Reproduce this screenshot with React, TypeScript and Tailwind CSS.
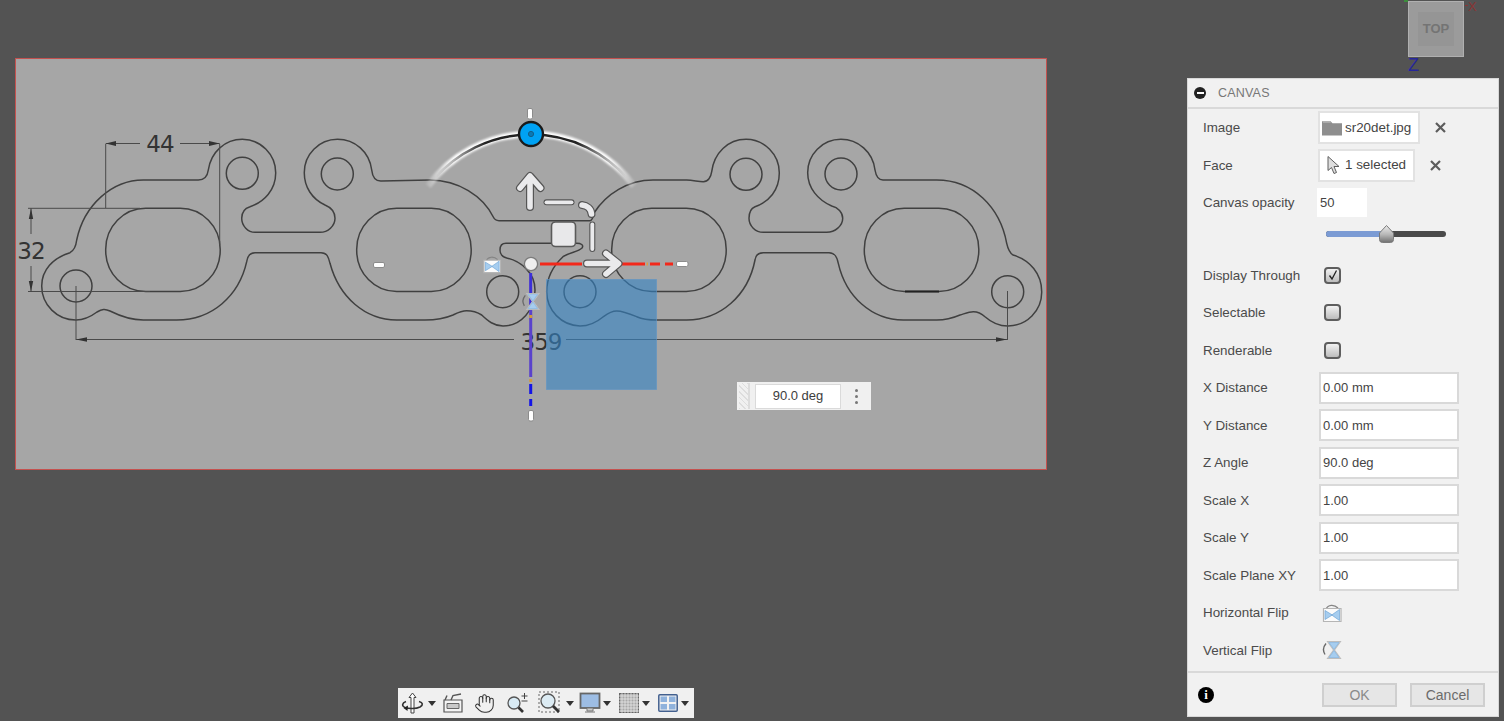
import { Hand } from "lucide-react";

const font = "font-['Liberation_Sans',Arial,sans-serif]";

const gasket =
  "M70 252.7 C73 251 76 246 76.7 240 C84 205 112 180 143.3 180 L198.3 180 C204 180 207.5 176 208.3 170 C211 152 225 139.3 242.3 139.3 A33.5 33.5 0 0 1 275.7 173 C275.7 190 264 202 250 206.7 C244 208.5 241.7 213 241.7 218.3 C241.7 226 248 232.3 255 232.3 L320 232.3 C328 232.3 335 226 335 218.3 C335 212 331 207.5 325 205 C312 199 304.3 187 304.3 173 A33.2 33.2 0 0 1 337.5 139.3 C355 139.3 369.5 152 371.7 170 C372.5 177 376 181.5 381.7 181 L430 180 C458 180 483 196 493.3 217 C494.5 219.5 496 220.7 499 220.7 L590 220.7 C592 220.7 593 218 594 213 C606 194 628 180 653 180 L686.7 180 C693 180 698 181.7 703.3 181.7 C708 181.7 711 177 711.7 171.7 C714 153 728 139.3 746 139.3 A33.5 33.5 0 0 1 779.3 173 C779.3 190 769 202 755 206.7 C750.5 208.5 749 213 749 218.3 C749 226 755.5 232.3 763.3 232.3 L826.7 232.3 C835 232.3 842.7 226 842.7 218.3 C842.7 212.5 838 207.5 831.7 206 C818 200 807.7 188 807.7 173 A33.2 33.2 0 0 1 841 139.3 C858 139.3 873 152 875 170 C876 176 879 180 883 180 L936.7 180 C973 180 1000 207 1006.7 243.3 C1008 249 1010 253 1013 255 C1030 260 1041.7 274 1041.7 291.7 A33.8 33.8 0 0 1 1007.7 326 C998 326 991 322 985 316.7 C981 313 977 311.7 973.3 311.7 C969 311.7 965 313.5 960 315 C953 318 945 320 936.7 320 L903.3 320 C872 320 846 297 838.3 263.3 C837 257 835 252.7 829 252.7 L763.3 252.7 C758 252.7 755.5 256 755 260 C748 296 720 320 686.7 320 L656.7 320 C648 320 642 319 636.7 316.7 C629 313.5 623 311 616.7 311 C611 311 607 314 603.3 316.7 C597 322 589 326 580 326 A34.2 34.2 0 0 1 546.7 291.7 C546.7 278 553 266 563 256.7 C570 252 578 252 582 248 C584 245 581 243.3 576.7 243.3 L506 243.3 C502 243.3 500 246 500 250 C500 254 503 257 506.7 258 C520 261 535 272 535 290 C535 310 521 326 503 326 C494 326 488 321 481.7 315 C477 312 472 310.7 466.7 310.7 C461 310.7 457 313 453 315 C446 318 436 320 425 320 L396.7 320 C365 320 339 297 330 263.3 C328.5 257 327 252.7 321 252.7 L255 252.7 C250 252.7 247.5 256 246.7 261.7 C239 296 212 320 176.7 320 L143.3 320 C130 320 120 316 110 311 C105 308.5 102 309 97 312 C91 316.5 84 320 76 320 A34 34 0 0 1 41.7 286 C41.7 270 53 258 70 252.7 Z";

const ports = [105.7, 356.7, 611.7, 864.3];
const holes = [
  [242.3, 173.3],
  [337.3, 174],
  [746, 174.3],
  [841, 174],
  [76, 286],
  [1007.7, 291.7],
  [502.7, 291.7],
  [580, 291.7],
];

function FlipH({ x = 0, y = 0, size = 20 }: { x?: number; y?: number; size?: number }) {
  return (
    <svg x={x} y={y} width={size} height={size} viewBox="0 0 20 20">
      <path d="M4 6C6 1.5 12 1 16 5" fill="none" stroke="#858585" strokeWidth="1.2" />
      <path d="M1.5 5.5V18.5H19V5.5Z" fill="#fbfbfb" stroke="#b5b5b5" strokeWidth="1.2" />
      <path d="M3 7.5L10 11.8V12.2L3 16.5ZM17.5 6.5L10 11.8V12.2L17.5 17.5Z" fill="#a6cdef" stroke="#6ea5d6" strokeWidth=".7" />
    </svg>
  );
}

function FlipV({ x = 0, y = 0, size = 20 }: { x?: number; y?: number; size?: number }) {
  return (
    <svg x={x} y={y} width={size} height={size} viewBox="0 0 20 20">
      <path d="M4 3.5C1 7 .8 11 3 14.5" fill="none" stroke="#6a6a6a" strokeWidth="1.4" />
      <path d="M5.5 1.5H18.5L12.5 10L18.5 18.5H5.5L11.5 10Z" fill="#fbfbfb" stroke="#bdbdbd" strokeWidth="1.1" />
      <path d="M7 2.5H17L12 9.5ZM7 17.5H17L12 10.5Z" fill="#a6cdef" stroke="#6ea5d6" strokeWidth=".6" />
    </svg>
  );
}

function ThickLine({ d, wide = false }: { d: string; wide?: boolean }) {
  return (
    <>
      <path d={d} fill="none" stroke="#555" strokeWidth={wide ? 8 : 6} strokeLinecap="round" strokeLinejoin="round" />
      <path d={d} fill="none" stroke="#eaeaec" strokeWidth={wide ? 5.6 : 3.8} strokeLinecap="round" strokeLinejoin="round" />
    </>
  );
}

function Sketch() {
  return (
    <svg viewBox="15 58 1032 412" className="block h-full w-full">
      <defs>
        <linearGradient id="arcGlow" gradientUnits="userSpaceOnUse" x1="422" y1="0" x2="640" y2="0">
          <stop offset="0" stopColor="#fff" stopOpacity="0" />
          <stop offset=".14" stopColor="#fff" />
          <stop offset=".86" stopColor="#fff" />
          <stop offset="1" stopColor="#fff" stopOpacity="0" />
        </linearGradient>
        <linearGradient id="arcDark" gradientUnits="userSpaceOnUse" x1="436" y1="0" x2="626" y2="0">
          <stop offset="0" stopColor="#222" stopOpacity="0" />
          <stop offset=".26" stopColor="#222" />
          <stop offset=".74" stopColor="#222" />
          <stop offset="1" stopColor="#222" stopOpacity="0" />
        </linearGradient>
      </defs>

      {/* part outline */}
      <g fill="none" stroke="#404040" strokeWidth="1.5">
        <path d={gasket} />
        {ports.map((x) => (
          <rect key={x} x={x} y="208.3" width="114.5" height="83.3" rx="40" ry="41" />
        ))}
        {holes.map(([cx, cy]) => (
          <circle key={cx} cx={cx} cy={cy} r="16" />
        ))}
      </g>
      <path d="M905 291.6H939" stroke="#222" strokeWidth="2" />

      {/* dimensions */}
      <g fill="none" stroke="#4a4a4a" strokeWidth="1">
        <path d="M105.7 144V208M219.7 144V245M105.7 143.5H140M180 143.5H219.7" />
        <path d="M28 208.3H140M28 291.5H150M31 208.3V234M31 266V291.5" />
        <path d="M76 286V340M1007.5 291V340M76 339.5H514M566 339.5H1007" />
      </g>
      <g fill="#333">
        <path d="M105.7 143.5L116 141V146ZM219.7 143.5L209 141V146Z" />
        <path d="M31 208.3L28.8 219H33.2ZM31 291.5L28.8 281H33.2Z" />
        <path d="M76 339.5L87 337.3V341.7ZM1007 339.5L996 337.3V341.7Z" />
      </g>
      <g fill="#333" fontSize="23" textAnchor="middle" letterSpacing="-1" fontFamily="'DejaVu Sans',sans-serif">
        <text x="160" y="152">44</text>
        <text x="31" y="259">32</text>
        <text x="541" y="350">359</text>
      </g>

      {/* sketch plane square */}
      <rect x="546.5" y="279.5" width="110" height="110" fill="#3484c5" fillOpacity=".6" stroke="#5e95c6" strokeOpacity=".6" />

      {/* rotate arc */}
      <path d="M428 186A128 128 0 0 1 634 186" fill="none" stroke="url(#arcGlow)" strokeWidth="6.5" className="blur-[0.8px]" />
      <path d="M434 179A128 128 0 0 1 628 179" fill="none" stroke="url(#arcDark)" strokeWidth="2.4" />

      {/* axes */}
      <path d="M540 264H582M622 264H645M650 264H660M665 264H673" stroke="#f3281a" strokeWidth="3" />
      <path d="M646.5 264H648" stroke="#e0a040" strokeWidth="3" />
      <path d="M530.7 273V377" stroke="#5a42cc" strokeWidth="3" />
      <path d="M530.7 273V310" stroke="#3a2fd8" strokeWidth="2.4" />
      <path d="M530.7 315V318M530.7 379V382" stroke="#d09a40" strokeWidth="3" />
      <path d="M530.7 384V394M530.7 399V406" stroke="#1414e6" strokeWidth="3" />

      {/* grips */}
      <ThickLine wide d="M530 207V178M520 188L530 176L540.5 188" />
      <ThickLine wide d="M587 263.5H617M606 253.5L618.5 263.5L606 274" />
      <ThickLine d="M546.5 202.3H571.5" />
      <ThickLine wide d="M582 205C587 205.5 591 208.5 591.5 214" />
      <ThickLine d="M592.3 224.5V249" />
      <rect x="551.5" y="222" width="24" height="24.5" rx="4" fill="#e8e8ea" stroke="#5a5a5a" strokeWidth="1.6" />
      <circle cx="531" cy="264" r="6.6" fill="#efefef" stroke="#7c7c7c" strokeWidth="1.3" />

      {/* small handles */}
      <g fill="#fff" stroke="#8c8c8c">
        <rect x="373.5" y="262.5" width="11" height="5" rx="1.5" />
        <rect x="676.5" y="261.5" width="11.5" height="5" rx="1.5" />
        <rect x="527.5" y="108.5" width="5" height="10.5" rx="1.5" />
        <rect x="528.5" y="410.5" width="5" height="10.5" rx="1.5" />
      </g>
      <FlipH x={482.5} y={255} size={19} />
      <FlipV x={521.5} y={292} size={19} />

      <circle cx="531" cy="134" r="12" fill="#00a2f4" stroke="#1a1a1a" strokeWidth="2.4" />
      <circle cx="531" cy="134" r="2.6" fill="#0a79b4" stroke="#135f88" />
    </svg>
  );
}

function Row({ label, children }: { label: string; children?: React.ReactNode }) {
  return (
    <div className="flex h-[37.5px] items-center">
      <span className="w-[115px] shrink-0 whitespace-nowrap pl-[15px] pt-[1px] text-[13.4px] text-[#4b4b4b]">{label}</span>
      {children}
    </div>
  );
}

function Field({ value }: { value: string }) {
  return (
    <div className="ml-[16px] flex h-[32px] w-[140px] items-center border-2 border-[#d9d9d9] bg-white pl-[2px] text-[13px] text-[#444]">{value}</div>
  );
}

function Check({ on = false }: { on?: boolean }) {
  return (
    <div className="ml-[21px] flex h-[17px] w-[17px] items-center justify-center rounded-[4px] border-2 border-[#5e5e5e] bg-gradient-to-b from-[#f2f2f2] to-[#bdbdbd]">
      {on && (
        <svg width="12" height="12" viewBox="0 0 12 12">
          <path d="M2.5 6.5L5 10L9.5 1.5" fill="none" stroke="#222" strokeWidth="1.3" />
        </svg>
      )}
    </div>
  );
}

function CloseX() {
  return (
    <svg width="11" height="11" viewBox="0 0 11 11">
      <path d="M1 1L10 10M10 1L1 10" stroke="#5c5c5c" strokeWidth="2.2" />
    </svg>
  );
}

function Slider() {
  return (
    <div className="flex h-[35px] items-start pl-[138px] pt-[9px]">
      <div className="relative flex h-[6px] w-[120px] rounded-full bg-[#4a4a4a]">
        <div className="h-full w-[60px] rounded-l-full bg-[#7b9bd4]" />
        <svg width="17" height="18" viewBox="0 0 17 18" className="absolute left-[52px] top-[-6px]">
          <defs>
            <linearGradient id="thumb" x1="0" y1="0" x2="0" y2="1">
              <stop offset="0" stopColor="#ececec" />
              <stop offset=".55" stopColor="#b5b5b5" />
              <stop offset="1" stopColor="#707070" />
            </linearGradient>
          </defs>
          <path d="M8.5 .5L15.5 8V14.5Q15.5 17.5 12.5 17.5H4.5Q1.5 17.5 1.5 14.5V8Z" fill="url(#thumb)" stroke="#7a7a7a" />
        </svg>
      </div>
    </div>
  );
}

function Panel() {
  return (
    <div className={`absolute left-[1187px] top-[78px] flex h-[639px] w-[312px] flex-col border border-[#d8d8d8] bg-[#f1f1f1] ${font}`}>
      <div className="flex h-[30px] shrink-0 items-center gap-[12px] border-b-2 border-[#d9d9d9] pl-[6px]">
        <div className="flex h-[12px] w-[12px] items-center justify-center rounded-full bg-[#222]">
          <div className="h-[2px] w-[7px] bg-white" />
        </div>
        <span className="pt-[1px] text-[12.5px] tracking-[0.2px] text-[#777]">CANVAS</span>
      </div>
      <div className="flex flex-1 flex-col">
        <Row label="Image">
          <div className="ml-[15px] flex h-[33px] w-[102px] items-center gap-[3px] border-2 border-[#e2e2e2] bg-white pl-[2px] text-[13.4px] text-[#444]">
            <svg width="20" height="16" viewBox="0 0 21 16">
              <path d="M0 1H9L11 3H21V16H0Z" fill="#8e8e8e" />
              <path d="M1 1H8L9.5 2.5H1Z" fill="#b5b5b5" />
            </svg>
            sr20det.jpg
          </div>
          <span className="ml-[15px] flex"><CloseX /></span>
        </Row>
        <Row label="Face">
          <div className="ml-[15px] flex h-[33px] w-[97px] items-center gap-[5px] border-2 border-[#e2e2e2] bg-white pl-[7px] text-[13.4px] text-[#444]">
            <svg width="13" height="20" viewBox="0 0 13 19">
              <path d="M1 1V15L4.5 12L7 18L9.5 17L7 11H12Z" fill="#dedede" stroke="#5f5f5f" />
            </svg>
            1 selected
          </div>
          <span className="ml-[15px] flex"><CloseX /></span>
        </Row>
        <Row label="Canvas opacity">
          <div className="ml-[14px] flex h-[29px] w-[50px] items-center bg-white pl-[3px] text-[13px] text-[#444]">50</div>
        </Row>
        <Slider />
        <Row label="Display Through"><Check on /></Row>
        <Row label="Selectable"><Check /></Row>
        <Row label="Renderable"><Check /></Row>
        <Row label="X Distance"><Field value="0.00 mm" /></Row>
        <Row label="Y Distance"><Field value="0.00 mm" /></Row>
        <Row label="Z Angle"><Field value="90.0 deg" /></Row>
        <Row label="Scale X"><Field value="1.00" /></Row>
        <Row label="Scale Y"><Field value="1.00" /></Row>
        <Row label="Scale Plane XY"><Field value="1.00" /></Row>
        <Row label="Horizontal Flip">
          <span className="ml-[19px] flex"><svg width="20" height="20"><FlipH /></svg></span>
        </Row>
        <Row label="Vertical Flip">
          <span className="ml-[19px] flex"><svg width="20" height="20"><FlipV /></svg></span>
        </Row>
      </div>
      <div className="flex h-[45px] shrink-0 items-center border-t-2 border-[#d9d9d9] pl-[10px]">
        <div className="flex h-[16px] w-[16px] items-center justify-center rounded-full bg-black font-['Liberation_Serif',serif] text-[13px] font-bold text-white">i</div>
        <button className="ml-[108px] h-[24px] w-[75px] border-2 border-[#cfcfcf] bg-[#e6e6e6] text-[14px] text-[#8a8a8a]">OK</button>
        <button className="ml-[13px] h-[24px] w-[75px] border-2 border-[#cfcfcf] bg-[#e6e6e6] text-[14px] text-[#6b6b6b]">Cancel</button>
      </div>
    </div>
  );
}

function Caret() {
  return (
    <svg width="8" height="5" viewBox="0 0 8 5" className="shrink-0">
      <path d="M0 0H8L4 5Z" fill="#333" />
    </svg>
  );
}

function NavBar() {
  return (
    <div className="absolute left-[398px] top-[688px] flex h-[30px] w-[296px] items-center bg-[#f0f0f0] pl-[3px]">
      <svg width="23" height="24" viewBox="0 0 23 24">
        <path d="M11.5 2L8 6.5H10V22H13V6.5H15Z" fill="#fff" stroke="#444" strokeWidth="1" />
        <path d="M5 10.5C1 12 .5 15 4 16.5C8 18 15 18 19 16C22.5 14 22 11.5 18 10.5" fill="none" stroke="#333" strokeWidth="1.6" />
        <path d="M7 14.5L2.5 17L6.5 20Z" fill="#222" />
      </svg>
      <span className="ml-[4px] flex"><Caret /></span>
      <svg width="22" height="22" viewBox="0 0 22 22" className="ml-[6px]">
        <path d="M2 8H20V20H2Z" fill="#f4f4f4" stroke="#555" strokeWidth="1.2" />
        <path d="M3 8L5 3.5M9 8L11 3.5L19 2" fill="none" stroke="#555" strokeWidth="1.4" />
        <path d="M5 11.5H17V16.5H5Z" fill="#c9c9c9" stroke="#666" />
      </svg>
      <Hand size={21} strokeWidth={1.2} color="#333" className="ml-[10px]" />
      <svg width="25" height="22" viewBox="0 0 25 22" className="ml-[10px]">
        <circle cx="9" cy="11" r="6" fill="#d9ebf5" stroke="#555" strokeWidth="1.3" />
        <path d="M13.5 15.5L18 20" stroke="#333" strokeWidth="2.6" />
        <path d="M16.5 4H22.5M19.5 1V7M16.5 9H22.5" stroke="#444" strokeWidth="1" />
      </svg>
      <svg width="24" height="24" viewBox="0 0 24 24" className="ml-[8px]">
        <rect x="1" y="1" width="20" height="20" fill="none" stroke="#666" strokeDasharray="2 2" />
        <circle cx="10" cy="10" r="7" fill="#dcebf3" stroke="#555" strokeWidth="1.3" />
        <path d="M15 15L21 21" stroke="#333" strokeWidth="2.8" />
      </svg>
      <span className="ml-[4px] flex"><Caret /></span>
      <svg width="22" height="22" viewBox="0 0 22 22" className="ml-[5px]">
        <rect x="1.5" y="1.5" width="19" height="14.5" fill="#9dbde4" stroke="#666" strokeWidth="1.8" />
        <path d="M8 16.5V19H14V16.5M6 20H16" fill="#ccc" stroke="#777" />
      </svg>
      <span className="ml-[2px] flex"><Caret /></span>
      <svg width="20" height="20" viewBox="0 0 20 20" className="ml-[8px]">
        <rect x=".5" y=".5" width="19" height="19" fill="#a8a8a8" stroke="#666" />
        <path d="M3 0V20M6 0V20M9 0V20M12 0V20M15 0V20M18 0V20M0 3H20M0 6H20M0 9H20M0 12H20M0 15H20M0 18H20" stroke="#eee" strokeWidth=".7" />
      </svg>
      <span className="ml-[3px] flex"><Caret /></span>
      <svg width="20" height="18" viewBox="0 0 20 18" className="ml-[8px]">
        <rect x=".8" y=".8" width="18.4" height="16.4" rx="1" fill="#f2f2f2" stroke="#42608f" strokeWidth="1.5" />
        <path d="M2.5 2.5H9V8H2.5ZM11 2.5H17.5V8H11ZM2.5 10H9V15.5H2.5ZM11 10H17.5V15.5H11Z" fill="#8fb2dc" />
      </svg>
      <span className="ml-[3px] flex"><Caret /></span>
    </div>
  );
}

function AngleInput() {
  return (
    <div className={`absolute left-[737px] top-[382px] flex h-[28px] w-[134px] items-center bg-[#f0f0f0] ${font}`}>
      <div className="ml-[2px] h-[26px] w-[11px] border-r-2 border-[#dcdcdc] bg-[repeating-linear-gradient(45deg,#dddddd_0,#dddddd_1px,#f0f0f0_1px,#f0f0f0_4px)]" />
      <div className="ml-[5px] flex h-[25px] w-[86px] items-center justify-center border border-[#dadada] bg-white text-[13px] text-[#3d3d3d]">90.0 deg</div>
      <div className="ml-[14px] flex flex-col gap-[3px]">
        <span className="h-[3px] w-[3px] rounded-full bg-[#777]" />
        <span className="h-[3px] w-[3px] rounded-full bg-[#777]" />
        <span className="h-[3px] w-[3px] rounded-full bg-[#777]" />
      </div>
    </div>
  );
}

function ViewCube() {
  return (
    <div className={font}>
      <span className="absolute left-[1404px] top-0 h-[2px] w-[4px] bg-[#3c8c3c]" />
      <div className="absolute left-[1408px] top-[1px] flex h-[56px] w-[56px] items-center justify-center border border-[#b0b0b0] bg-[#9b9b9b]">
        <div className="flex h-[34px] w-[36px] items-center justify-center bg-[#959595] text-[13px] font-bold text-[#747474]">TOP</div>
      </div>
      <span className="absolute left-[1465px] top-[5px] h-[1px] w-[3px] bg-[#8a3535]" />
      <span className="absolute left-[1468px] top-0 text-[13px] leading-[13px] text-[#8a3535]">X</span>
      <span className="absolute left-[1408px] top-[56px] text-[18px] leading-[18px] text-[#26269c]">Z</span>
    </div>
  );
}

export default function App() {
  return (
    <div className="relative h-[721px] w-full overflow-hidden bg-[#535353]">
      <div className="absolute left-[15px] top-[58px] h-[412px] w-[1032px] bg-[#a6a6a6] outline outline-1 -outline-offset-1 outline-[#c4514f]">
        <Sketch />
      </div>
      <AngleInput />
      <ViewCube />
      <Panel />
      <NavBar />
    </div>
  );
}
